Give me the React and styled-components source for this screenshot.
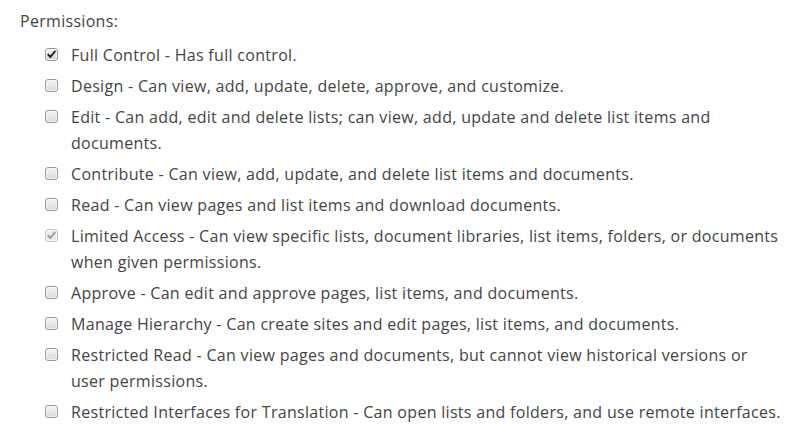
import React from "react";
import styled, { createGlobalStyle } from "styled-components";

const Global = createGlobalStyle`
  html, body { margin: 0; padding: 0; background: #ffffff; }
  body { font-family: "Open Sans", "Noto Sans", sans-serif; }
`;

const Page = styled.div`
  width: 800px;
  height: 426px;
  box-sizing: border-box;
  padding: 8px 18px 0 20px;
  color: #444444;
  font-size: 16px;
  letter-spacing: 0.3px;
  overflow: hidden;
`;

const Label = styled.div`
  line-height: 26px;
  margin-bottom: 8px;
`;

const List = styled.ul`
  list-style: none;
  margin: 0;
  padding: 0 0 0 25px;
  display: flex;
  flex-direction: column;
  gap: 5px;
`;

const Row = styled.li`
  display: flex;
  align-items: flex-start;
  gap: 13px;
  line-height: 26px;
`;

const Box = styled.span`
  flex: none;
  width: 13px;
  height: 13px;
  margin-top: 6px;
  box-sizing: border-box;
  border: 1px solid ${(p) => (p.$disabled ? "#c6c6c6" : "#9a9a9a")};
  border-radius: 3px;
  background: ${(p) =>
    p.$disabled
      ? "linear-gradient(#f0f0f0, #e6e6e6)"
      : "linear-gradient(#f4f4f4, #d9d9d9)"};
  box-shadow: inset 0 0 0 1px rgba(255, 255, 255, 0.6);
  display: flex;
  align-items: center;
  justify-content: center;
`;

const Text = styled.span`
  flex: 1;
`;

const Check = ({ color }) => (
  <svg width="9" height="9" viewBox="0 0 9 9">
    <path
      d="M1.2 4.6 L3.4 7 L7.9 1.4"
      fill="none"
      stroke={color}
      strokeWidth="1.9"
      strokeLinecap="round"
      strokeLinejoin="round"
    />
  </svg>
);

const items = [
  { t: "Full Control - Has full control.", checked: true },
  { t: "Design - Can view, add, update, delete, approve, and customize." },
  {
    t: "Edit - Can add, edit and delete lists; can view, add, update and delete list items and documents.",
  },
  { t: "Contribute - Can view, add, update, and delete list items and documents." },
  { t: "Read - Can view pages and list items and download documents." },
  {
    t: "Limited Access - Can view specific lists, document libraries, list items, folders, or documents when given permissions.",
    checked: true,
    disabled: true,
  },
  { t: "Approve - Can edit and approve pages, list items, and documents." },
  { t: "Manage Hierarchy - Can create sites and edit pages, list items, and documents." },
  {
    t: "Restricted Read - Can view pages and documents, but cannot view historical versions or user permissions.",
  },
  {
    t: "Restricted Interfaces for Translation - Can open lists and folders, and use remote interfaces.",
  },
];

export default function App() {
  return (
    <>
      <Global />
      <Page>
        <Label>Permissions:</Label>
        <List>
          {items.map((it) => (
            <Row key={it.t}>
              <Box $disabled={it.disabled}>
                {it.checked && <Check color={it.disabled ? "#9a9a9a" : "#222"} />}
              </Box>
              <Text>{it.t}</Text>
            </Row>
          ))}
        </List>
      </Page>
    </>
  );
}
